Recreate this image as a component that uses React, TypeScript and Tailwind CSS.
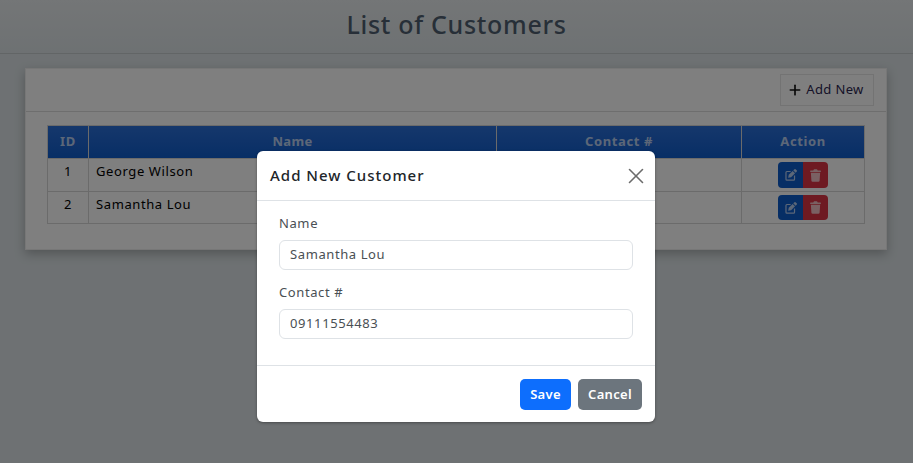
import React from 'react';
import { Plus, X } from 'lucide-react';

const customers = [
  { id: 1, name: 'George Wilson', rowClass: 'h-[33px]', btnClass: 'h-[26px]', cellClass: 'pb-[7px]' },
  { id: 2, name: 'Samantha Lou', rowClass: 'h-[32px]', btnClass: 'h-[25px]', cellClass: 'pb-[5px]' },
];

function EditIcon() {
  return (
    <svg viewBox="0 0 16 16" width="12" height="12" fill="currentColor">
      <path d="M15.5 1.6 14.4.5a1.5 1.5 0 0 0-2.1 0L11 1.8 14.2 5l1.3-1.3a1.5 1.5 0 0 0 0-2.1z" />
      <path d="M10.2 2.6 5 7.8l-.8 4 4-.8 5.2-5.2z" />
      <path d="M2.5 2.5A2 2 0 0 0 .5 4.5v9a2 2 0 0 0 2 2h9a2 2 0 0 0 2-2V8.5h-1.6v5a.4.4 0 0 1-.4.4h-9a.4.4 0 0 1-.4-.4v-9a.4.4 0 0 1 .4-.4h5V2.5z" />
    </svg>
  );
}

function TrashIcon() {
  return (
    <svg viewBox="0 0 14 16" width="11" height="13" fill="currentColor">
      <path d="M4.6.6A1 1 0 0 1 5.5 0h3a1 1 0 0 1 .9.6L9.8 1.500H13a1 1 0 0 1 0 2H1a1 1 0 0 1 0-2h3.200z" />
      <path d="M1.100 4.500h11.800l-.7 10.100a1.500 1.500 0 0 1-1.500 1.400H3.300a1.500 1.500 0 0 1-1.500-1.400z" />
    </svg>
  );
}

export default function App() {
  return (
    <div className="relative h-[463px] w-[913px] overflow-hidden bg-[#dce3e6] font-['Noto_Sans',sans-serif] text-[13px] tracking-[0.6px] text-[#212529]">
      <header className="flex h-[54px] items-center justify-center border-b border-[#c4cacd] bg-gradient-to-b from-[#e8ecee] to-[#dce3e6] pb-[4px]">
        <h1 className="text-[25px] font-medium tracking-[0.7px] text-[#4f5f70]">List of Customers</h1>
      </header>

      <div className="px-[25px] pt-[14px]">
        <div className="h-[182px] w-[862px] border border-[#eeeeee] bg-white shadow-[0_4px_10px_rgba(0,0,0,0.25)]">
          <div className="flex h-[43px] items-center justify-end border-b border-[#dddddd] pr-[12px]">
            <button className="flex h-[32px] w-[94px] items-center justify-center gap-[3px] border border-[#e6e6e6] pr-[3px] tracking-[0.35px] text-[#2b2650]">
              <Plus size={16} strokeWidth={2.5} className="text-[#111111]" />
              Add New
            </button>
          </div>
          <div className="px-[21px] pt-[13px]">
            <table className="w-[818px] table-fixed border-collapse border border-[#d6d6d6]">
              <thead>
                <tr className="h-[33px] bg-gradient-to-b from-[#2a6fd8] to-[#0d5ccb] text-white/70">
                  <th className="w-[41px] border border-[#d6d6d6] font-bold">ID</th>
                  <th className="w-[408px] border border-[#d6d6d6] font-bold tracking-[0.3px]">Name</th>
                  <th className="w-[245px] border border-[#d6d6d6] font-bold">Contact #</th>
                  <th className="border border-[#d6d6d6] font-bold">Action</th>
                </tr>
              </thead>
              <tbody>
                {customers.map((c) => (
                  <tr key={c.id} className={`${c.rowClass} text-black`}>
                    <td className={`border border-[#d6d6d6] ${c.cellClass} text-center`}>{c.id}</td>
                    <td className={`border border-[#d6d6d6] px-[7px] ${c.cellClass}`}>{c.name}</td>
                    <td className="border border-[#d6d6d6]"></td>
                    <td className="border border-[#d6d6d6]">
                      <div className="flex justify-center">
                        <button className={`flex ${c.btnClass} w-[25px] items-center justify-center rounded-l-[4px] bg-[#0d5ccb] text-white/70`}>
                          <EditIcon />
                        </button>
                        <button className={`flex ${c.btnClass} w-[25px] items-center justify-center rounded-r-[4px] bg-[#dc3545] text-white/70`}>
                          <TrashIcon />
                        </button>
                      </div>
                    </td>
                  </tr>
                ))}
              </tbody>
            </table>
          </div>
        </div>
      </div>

      {/* backdrop */}
      <div className="absolute inset-0 bg-black/50"></div>

      {/* modal */}
      <div className="absolute left-[257px] top-[151px] w-[398px] rounded-[6px] bg-white text-[#212529] shadow-[0_1px_3px_rgba(0,0,0,0.35)]">
        <div className="flex h-[50px] items-center justify-between border-b border-[#dee2e6] pl-[13px] pr-[6px]">
          <h5 className="text-[15px] font-medium tracking-[1px]">Add New Customer</h5>
          <X size={26} strokeWidth={1.5} className="text-[#6c6c6c]" />
        </div>
        <div className="h-[164px] px-[22px] pt-[13px]">
          <label className="block text-[13px] leading-[19px] text-[#4a4f54]">Name</label>
          <div className="mt-[7px] flex h-[30px] w-[354px] items-center rounded-[6px] border border-[#dee2e6] px-[10px] text-[#4a4f54]">
            Samantha Lou
          </div>
          <label className="mt-[13px] block text-[13px] leading-[19px] text-[#4a4f54]">Contact #</label>
          <div className="mt-[7px] flex h-[30px] w-[354px] items-center rounded-[6px] border border-[#dee2e6] px-[10px] text-[#4a4f54]">
            09111554483
          </div>
        </div>
        <div className="flex h-[57px] items-start justify-end gap-[7px] border-t border-[#dee2e6] pr-[13px] pt-[13px] tracking-[0.3px]">
          <button className="flex h-[31px] w-[51px] items-center justify-center rounded-[5px] bg-[#0d6efd] font-semibold text-white">Save</button>
          <button className="flex h-[31px] w-[64px] items-center justify-center rounded-[5px] bg-[#6c757d] font-semibold text-white">Cancel</button>
        </div>
      </div>
    </div>
  );
}
